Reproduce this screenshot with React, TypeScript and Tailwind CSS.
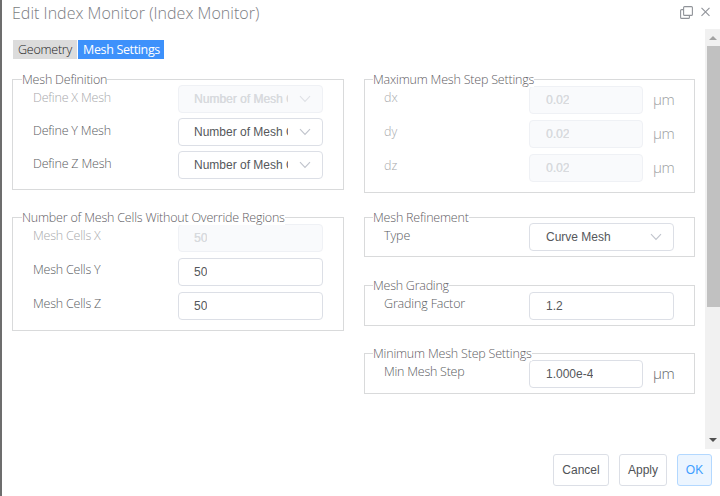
import type { ReactNode } from "react";

const humanist = "font-['Open_Sans','Noto_Sans',sans-serif] font-light";

function Chevron({ color }: { color: string }) {
  return (
    <svg width="12" height="8" viewBox="0 0 12 8" fill="none" className="shrink-0">
      <path d="M1 1.2L6 6.5L11 1.2" stroke={color} strokeWidth="1.1" />
    </svg>
  );
}

function Group({ title, legend, box, children }: { title: string; legend: string; box: string; children: ReactNode }) {
  return (
    <section className={`relative flex flex-col border border-[#d9dadb] ${box}`}>
      <h2 className={`absolute -top-[8px] h-[15px] whitespace-nowrap bg-white text-[12.5px] leading-[15px] text-[#5f6064] ${humanist} ${legend}`}>
        {title}
      </h2>
      {children}
    </section>
  );
}

interface FieldProps {
  label: string;
  value: string;
  tracking: string;
  side?: "left" | "right";
  disabled?: boolean;
  select?: boolean;
  unit?: boolean;
}

function Field({ label, value, tracking, side = "left", disabled, select, unit }: FieldProps) {
  return (
    <div className={`flex h-[28px] shrink-0 ${side === "left" ? "pl-[20px]" : "pl-[19px]"}`}>
      <label
        className={`w-[145px] whitespace-nowrap text-[12.5px] ${select ? "leading-[26px]" : "leading-[24px]"} ${humanist} ${tracking} ${disabled ? "text-[#a8a9ac]" : "text-[#5a5c61]"}`}
      >
        {label}
      </label>
      <div
        className={`flex h-[28px] items-center rounded-[4px] border pr-[11px] font-['Liberation_Sans',Arial,sans-serif] text-[12px] ${side === "left" ? "pl-[15px]" : "pl-[16px]"} ${unit ? "w-[114px]" : "w-[145px]"} ${disabled ? "border-[#eff1f5] bg-[#f9fafc] text-[#d8dade] [text-shadow:0.3px_0_0_#d8dade]" : "border-[#dcdfe6] bg-white text-[#55575b]"}`}
      >
        <span className={`min-w-0 overflow-hidden whitespace-nowrap ${select ? "w-[94px]" : ""}`}>{value}</span>
        {select && (
          <span className="ml-auto flex">
            <Chevron color={disabled ? "#dfe1e6" : "#c0c4cc"} />
          </span>
        )}
      </div>
      {unit && (
        <span className={`ml-[10px] text-[15px] leading-[26px] tracking-[-0.4px] ${humanist} ${disabled ? "text-[#9c9ea1]" : "text-[#66686c]"}`}>μm</span>
      )}
    </div>
  );
}

export default function App() {
  return (
    <div className="flex h-[496px] w-[720px] overflow-hidden bg-white">
      <div className="w-[2px] shrink-0 bg-[#6d6d6d]" />
      <div className="flex min-w-0 flex-1 flex-col">
        <header className="flex h-[29px] shrink-0 items-start justify-between pl-[10px] pr-[10px]">
          <h1 className={`whitespace-nowrap text-[16px] leading-[27px] tracking-[0.02px] text-[#7b7d82] ${humanist}`}>
            Edit Index Monitor (Index Monitor)
          </h1>
          <div className="flex gap-[8px] pt-[6px]">
            <svg width="13" height="13" viewBox="0 0 13 13" fill="none" stroke="#909399" strokeWidth="1.1">
              <rect x="3.6" y="0.6" width="8.8" height="8.8" rx="1" />
              <path d="M3.5 3.6H1.6a1 1 0 0 0-1 1v6.8a1 1 0 0 0 1 1h6.8a1 1 0 0 0 1-1V9.5" />
            </svg>
            <svg width="9" height="13" viewBox="0 0 9 13" stroke="#909399" strokeWidth="1.1">
              <path d="M0.5 1.8L8.5 9.8M8.5 1.8L0.5 9.8" />
            </svg>
          </div>
        </header>

        <div className="flex h-[420px] shrink-0">
          <main className="flex w-[703px] shrink-0 flex-col pl-[10px] pt-[11px]">
            <nav className="flex gap-px pl-px font-['Open_Sans','Noto_Sans',sans-serif] text-[12.5px] leading-[20px]">
              <span className="h-[19px] w-[64px] whitespace-nowrap bg-[#dcdcdc] pl-[5px] font-light tracking-[-0.25px] text-[#222]">Geometry</span>
              <span className="h-[19px] w-[86px] whitespace-nowrap bg-[#3d91fb] pl-[5px] tracking-[-0.35px] text-white">Mesh Settings</span>
            </nav>

            <div className="mt-[20px] flex gap-[20px]">
              <div className="flex w-[332px] flex-col gap-[27px]">
                <Group title="Mesh Definition" legend="left-[9px] tracking-[-0.2px]" box="h-[111px] gap-[5px] pt-[5px]">
                  <Field label="Define X Mesh" value="Number of Mesh Cells" tracking="tracking-[-0.2px]" select disabled />
                  <Field label="Define Y Mesh" value="Number of Mesh Cells" tracking="tracking-[-0.2px]" select />
                  <Field label="Define Z Mesh" value="Number of Mesh Cells" tracking="tracking-[-0.2px]" select />
                </Group>
                <Group title="Number of Mesh Cells Without Override Regions" legend="left-[9px] tracking-[-0.2px]" box="h-[114px] gap-[6px] pt-[6px]">
                  <Field label="Mesh Cells X" value="50" tracking="tracking-[-0.22px]" disabled />
                  <Field label="Mesh Cells Y" value="50" tracking="tracking-[-0.22px]" />
                  <Field label="Mesh Cells Z" value="50" tracking="tracking-[-0.22px]" />
                </Group>
              </div>

              <div className="flex w-[331px] flex-col">
                <Group title="Maximum Mesh Step Settings" legend="left-[8px] tracking-[-0.2px]" box="h-[114px] gap-[6px] pt-[6px]">
                  <Field side="right" label="dx" value="0.02" tracking="tracking-normal" unit disabled />
                  <Field side="right" label="dy" value="0.02" tracking="tracking-normal" unit disabled />
                  <Field side="right" label="dz" value="0.02" tracking="tracking-normal" unit disabled />
                </Group>
                <Group title="Mesh Refinement" legend="left-[8px] tracking-[-0.2px]" box="mt-[24px] h-[40px] pt-[5px]">
                  <Field side="right" label="Type" value="Curve Mesh" tracking="tracking-[-0.1px]" select />
                </Group>
                <Group title="Mesh Grading" legend="left-[8px] tracking-[-0.25px]" box="mt-[28px] h-[41px] pt-[6px]">
                  <Field side="right" label="Grading Factor" value="1.2" tracking="tracking-[-0.15px]" />
                </Group>
                <Group title="Minimum Mesh Step Settings" legend="left-[8px] tracking-[-0.2px]" box="mt-[27px] h-[41px] pt-[6px]">
                  <Field side="right" label="Min Mesh Step" value="1.000e-4" tracking="tracking-[-0.25px]" unit />
                </Group>
              </div>
            </div>
          </main>

          <div className="flex w-[15px] shrink-0 flex-col items-end bg-[#f1f1f1]">
            <svg width="15" height="17" viewBox="0 0 15 17" className="shrink-0">
              <path d="M4 11L8 7L12 11Z" fill="#a3a3a3" />
            </svg>
            <div className="h-[261px] w-[13px] bg-[#c1c1c1]" />
            <svg width="15" height="17" viewBox="0 0 15 17" className="mt-auto shrink-0">
              <path d="M4 6L12 6L8 10Z" fill="#505050" />
            </svg>
          </div>
        </div>

        <footer className="flex justify-end gap-[10px] pr-[8px] pt-[5px] font-['Liberation_Sans',Arial,sans-serif] text-[12px] text-[#505256]">
          <button className="h-[32px] w-[56px] rounded-[3px] border border-[#dcdfe6] bg-white">Cancel</button>
          <button className="h-[32px] w-[48px] rounded-[3px] border border-[#dcdfe6] bg-white">Apply</button>
          <button className="h-[32px] w-[35px] rounded-[3px] border border-[#b3d8ff] bg-[#ecf5ff] text-[#409eff]">OK</button>
        </footer>
      </div>
    </div>
  );
}
